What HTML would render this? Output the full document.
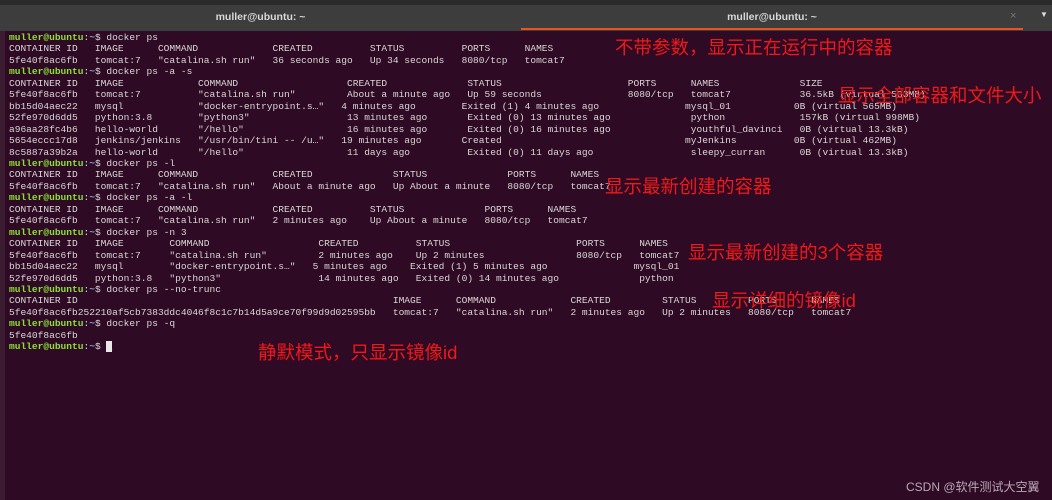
<!DOCTYPE html>
<html><head><meta charset="utf-8"><style>
html,body{margin:0;padding:0;}
body{width:1052px;height:500px;background:#2f0a25;position:relative;overflow:hidden;font-family:"Liberation Sans","Noto Sans CJK SC",sans-serif;}
.top{position:absolute;left:0;top:0;width:1052px;height:5px;background:#2a2a2a;}
.bar{position:absolute;left:0;top:5px;width:1052px;height:26px;background:#3d3d3d;}
.tab{position:absolute;top:5px;height:24px;line-height:24px;color:#d8d8d8;font-size:10.5px;font-weight:bold;text-align:center;}
.ul{position:absolute;left:521px;top:28px;width:502px;height:2px;background:#e95420;}
.leftedge{position:absolute;left:0;top:31px;width:5px;height:469px;background:#3a1b30;}
pre{position:absolute;left:9px;top:32px;margin:0;font-family:"Liberation Mono",monospace;font-size:9.55px;line-height:11.45px;color:#d8d8d4;white-space:pre;}
.g{color:#8ae234;font-weight:bold;}.b{color:#729fcf;font-weight:bold;}
.cur{background:#e8e8e8;color:#e8e8e8;}
.n{position:absolute;color:#f01818;font-size:18.5px;line-height:24px;font-family:"Liberation Sans","Noto Sans CJK SC",sans-serif;white-space:nowrap;}
.wm{position:absolute;left:906px;top:478px;color:#b8a8b4;font-size:12px;}
</style></head><body>
<div class="top"></div><div class="bar"></div>
<div class="tab" style="left:0;width:521px;">muller@ubuntu: ~</div>
<div class="tab" style="left:521px;width:502px;">muller@ubuntu: ~</div>
<div style="position:absolute;left:1010px;top:10px;color:#777;font-size:11px;">×</div>
<div style="position:absolute;left:1040px;top:10px;color:#ddd;font-size:8px;">▼</div>
<div class="ul"></div>
<div class="leftedge"></div>
<pre><span class="g">muller@ubuntu</span>:<span class="b">~</span>$ docker ps
CONTAINER ID   IMAGE      COMMAND             CREATED          STATUS          PORTS      NAMES
5fe40f8ac6fb   tomcat:7   "catalina.sh run"   36 seconds ago   Up 34 seconds   8080/tcp   tomcat7
<span class="g">muller@ubuntu</span>:<span class="b">~</span>$ docker ps -a -s
CONTAINER ID   IMAGE             COMMAND                   CREATED              STATUS                      PORTS      NAMES              SIZE
5fe40f8ac6fb   tomcat:7          "catalina.sh run"         About a minute ago   Up 59 seconds               8080/tcp   tomcat7            36.5kB (virtual 533MB)
bb15d04aec22   mysql             "docker-entrypoint.s…"   4 minutes ago        Exited (1) 4 minutes ago               mysql_01           0B (virtual 565MB)
52fe970d6dd5   python:3.8        "python3"                 13 minutes ago       Exited (0) 13 minutes ago              python             157kB (virtual 998MB)
a96aa28fc4b6   hello-world       "/hello"                  16 minutes ago       Exited (0) 16 minutes ago              youthful_davinci   0B (virtual 13.3kB)
5654eccc17d8   jenkins/jenkins   "/usr/bin/tini -- /u…"   19 minutes ago       Created                                myJenkins          0B (virtual 462MB)
8c5887a39b2a   hello-world       "/hello"                  11 days ago          Exited (0) 11 days ago                 sleepy_curran      0B (virtual 13.3kB)
<span class="g">muller@ubuntu</span>:<span class="b">~</span>$ docker ps -l
CONTAINER ID   IMAGE      COMMAND             CREATED              STATUS              PORTS      NAMES
5fe40f8ac6fb   tomcat:7   "catalina.sh run"   About a minute ago   Up About a minute   8080/tcp   tomcat7
<span class="g">muller@ubuntu</span>:<span class="b">~</span>$ docker ps -a -l
CONTAINER ID   IMAGE      COMMAND             CREATED          STATUS              PORTS      NAMES
5fe40f8ac6fb   tomcat:7   "catalina.sh run"   2 minutes ago    Up About a minute   8080/tcp   tomcat7
<span class="g">muller@ubuntu</span>:<span class="b">~</span>$ docker ps -n 3
CONTAINER ID   IMAGE        COMMAND                   CREATED          STATUS                      PORTS      NAMES
5fe40f8ac6fb   tomcat:7     "catalina.sh run"         2 minutes ago    Up 2 minutes                8080/tcp   tomcat7
bb15d04aec22   mysql        "docker-entrypoint.s…"   5 minutes ago    Exited (1) 5 minutes ago               mysql_01
52fe970d6dd5   python:3.8   "python3"                 14 minutes ago   Exited (0) 14 minutes ago              python
<span class="g">muller@ubuntu</span>:<span class="b">~</span>$ docker ps --no-trunc
CONTAINER ID                                                       IMAGE      COMMAND             CREATED         STATUS         PORTS      NAMES
5fe40f8ac6fb252210af5cb7383ddc4046f8c1c7b14d5a9ce70f99d9d02595bb   tomcat:7   "catalina.sh run"   2 minutes ago   Up 2 minutes   8080/tcp   tomcat7
<span class="g">muller@ubuntu</span>:<span class="b">~</span>$ docker ps -q
5fe40f8ac6fb
<span class="g">muller@ubuntu</span>:<span class="b">~</span>$ <span class="cur">_</span></pre>
<div class="n" style="left:615px;top:36px;">不带参数，显示正在运行中的容器</div>
<div class="n" style="left:838px;top:84px;">显示全部容器和文件大小</div>
<div class="n" style="left:605px;top:175px;">显示最新创建的容器</div>
<div class="n" style="left:688px;top:241px;">显示最新创建的3个容器</div>
<div class="n" style="left:712px;top:289px;">显示详细的镜像id</div>
<div class="n" style="left:258px;top:341px;">静默模式，只显示镜像id</div>
<div class="wm">CSDN @软件测试大空翼</div>
</body></html>
